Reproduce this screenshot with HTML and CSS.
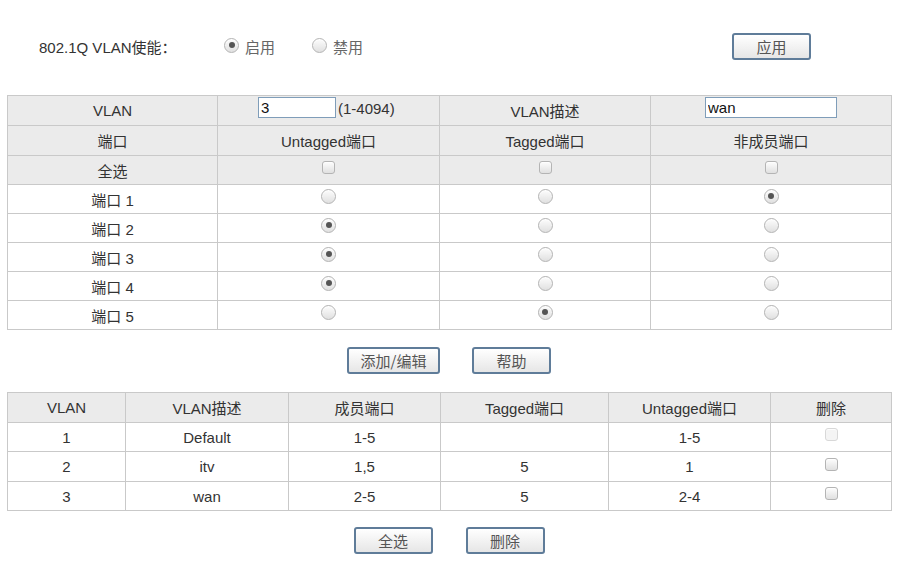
FILE: index.html
```html
<!DOCTYPE html>
<html>
<head>
<meta charset="utf-8">
<link rel="stylesheet" href="styles.css">
</head>
<body>
  <div class="page">
    <div class="enable">
      <span class="enable__label">802.1Q VLAN使能：</span>
      <label class="enable__opt"><input type="radio" name="en" class="radio" checked> 启用</label>
      <label class="enable__opt"><input type="radio" name="en" class="radio"> 禁用</label>
      <button class="btn enable__apply">应用</button>
    </div>

    <table class="grid grid_edit">
      <colgroup>
        <col style="width:210px"><col style="width:222px"><col style="width:211px"><col style="width:241px">
      </colgroup>
      <tr class="grid__head grid__tall">
        <td>VLAN</td>
        <td class="grid__left"><input class="field field_id" value="3"><span class="hint">(1-4094)</span></td>
        <td>VLAN描述</td>
        <td class="grid__left"><input class="field field_desc" value="wan"></td>
      </tr>
      <tr class="grid__head grid__tall">
        <td>端口</td><td>Untagged端口</td><td>Tagged端口</td><td>非成员端口</td>
      </tr>
      <tr class="grid__head">
        <td>全选</td>
        <td><input type="checkbox" class="check"></td>
        <td><input type="checkbox" class="check"></td>
        <td><input type="checkbox" class="check"></td>
      </tr>
      <tr>
        <td>端口 1</td>
        <td><input type="radio" name="p1" class="radio"></td>
        <td><input type="radio" name="p1" class="radio"></td>
        <td><input type="radio" name="p1" class="radio" checked></td>
      </tr>
      <tr>
        <td>端口 2</td>
        <td><input type="radio" name="p2" class="radio" checked></td>
        <td><input type="radio" name="p2" class="radio"></td>
        <td><input type="radio" name="p2" class="radio"></td>
      </tr>
      <tr>
        <td>端口 3</td>
        <td><input type="radio" name="p3" class="radio" checked></td>
        <td><input type="radio" name="p3" class="radio"></td>
        <td><input type="radio" name="p3" class="radio"></td>
      </tr>
      <tr>
        <td>端口 4</td>
        <td><input type="radio" name="p4" class="radio" checked></td>
        <td><input type="radio" name="p4" class="radio"></td>
        <td><input type="radio" name="p4" class="radio"></td>
      </tr>
      <tr>
        <td>端口 5</td>
        <td><input type="radio" name="p5" class="radio"></td>
        <td><input type="radio" name="p5" class="radio" checked></td>
        <td><input type="radio" name="p5" class="radio"></td>
      </tr>
    </table>

    <div class="actions actions_edit">
      <button class="btn btn_wide">添加/编辑</button>
      <button class="btn">帮助</button>
    </div>

    <table class="grid grid_list">
      <colgroup>
        <col style="width:118px"><col style="width:163px"><col style="width:152px"><col style="width:168px"><col style="width:162px"><col style="width:121px">
      </colgroup>
      <tr class="grid__head grid__tall">
        <td>VLAN</td><td>VLAN描述</td><td>成员端口</td><td>Tagged端口</td><td>Untagged端口</td><td>删除</td>
      </tr>
      <tr>
        <td>1</td><td>Default</td><td>1-5</td><td></td><td>1-5</td>
        <td><input type="checkbox" class="check" disabled></td>
      </tr>
      <tr class="grid__tall">
        <td>2</td><td>itv</td><td>1,5</td><td>5</td><td>1</td>
        <td><input type="checkbox" class="check"></td>
      </tr>
      <tr>
        <td>3</td><td>wan</td><td>2-5</td><td>5</td><td>2-4</td>
        <td><input type="checkbox" class="check"></td>
      </tr>
    </table>

    <div class="actions actions_list">
      <button class="btn">全选</button>
      <button class="btn">删除</button>
    </div>
  </div>
</body>
</html>
```

FILE: styles.css
```css
body {
    margin: 0;
    background: #fff;
    font-family: "Liberation Sans", Arial, "Noto Sans CJK SC", sans-serif;
    font-size: 15px;
    color: #333;
}

.page {
    padding: 33px 11px 0 7px;
}

.enable {
    display: flex;
    align-items: center;
    height: 26px;
    padding-left: 32px;
    margin-bottom: 36px;
}

.enable__label {
    width: 185px;
}

.enable__opt {
    display: flex;
    align-items: center;
    gap: 6px;
    width: 88px;
    color: #666;
    font-size: 15px;
}

.enable__apply {
    margin-left: 332px;
}

.radio,
.check {
    -webkit-appearance: none;
    appearance: none;
    margin: 0;
    width: 15px;
    height: 15px;
    border: 1px solid #b4b4b4;
    background: linear-gradient(#fdfdfd, #e0e0e0);
    box-shadow: inset 0 1px 1px rgba(255,255,255,.8);
    vertical-align: middle;
    position: relative;
    top: -4px;
}

.radio {
    border-radius: 50%;
}

.radio:checked::after {
    content: "";
    position: absolute;
    left: 3.5px;
    top: 3.5px;
    width: 6px;
    height: 6px;
    border-radius: 50%;
    background: #555;
}

.check {
    border-radius: 3px;
    width: 13px;
    height: 13px;
}

.check:disabled {
    border-color: #d8d8d8;
    background: #f4f4f4;
}

.enable .radio {
    top: -1px;
}

.grid {
    border-collapse: collapse;
    table-layout: fixed;
    width: 884px;
}

.grid td {
    border: 1px solid #c9c9c9;
    height: 28px;
    padding: 0;
    text-align: center;
    vertical-align: middle;
}

.grid__tall td {
    height: 29px;
}

.grid__head td {
    background: #ebebeb;
}

.grid_edit td.grid__left {
    text-align: left;
}

.field {
    font: inherit;
    color: #111;
    height: 21px;
    box-sizing: border-box;
    border: 1px solid #7f9db9;
    padding: 0 2px;
    vertical-align: middle;
    background: #fff;
    position: relative;
    top: -3px;
}

.field_id {
    width: 78px;
    margin-left: 40px;
}

.field_desc {
    width: 132px;
    margin-left: 54px;
}

.hint {
    margin-left: 2px;
}

.actions {
    display: flex;
    justify-content: center;
    gap: 32px;
}

.actions_edit {
    padding: 17px 0 18px;
}

.actions_list {
    padding-top: 16px;
    gap: 33px;
}

.btn {
    width: 79px;
    height: 27px;
    box-sizing: border-box;
    border: 2px solid #5f7c99;
    border-radius: 3px;
    background: linear-gradient(#ffffff, #e6e6e6);
    color: #555;
    font-family: "Noto Sans CJK SC", sans-serif;
    font-size: 15px;
    line-height: 21px;
    padding: 0;
}

.btn_wide {
    width: 93px;
}
```
